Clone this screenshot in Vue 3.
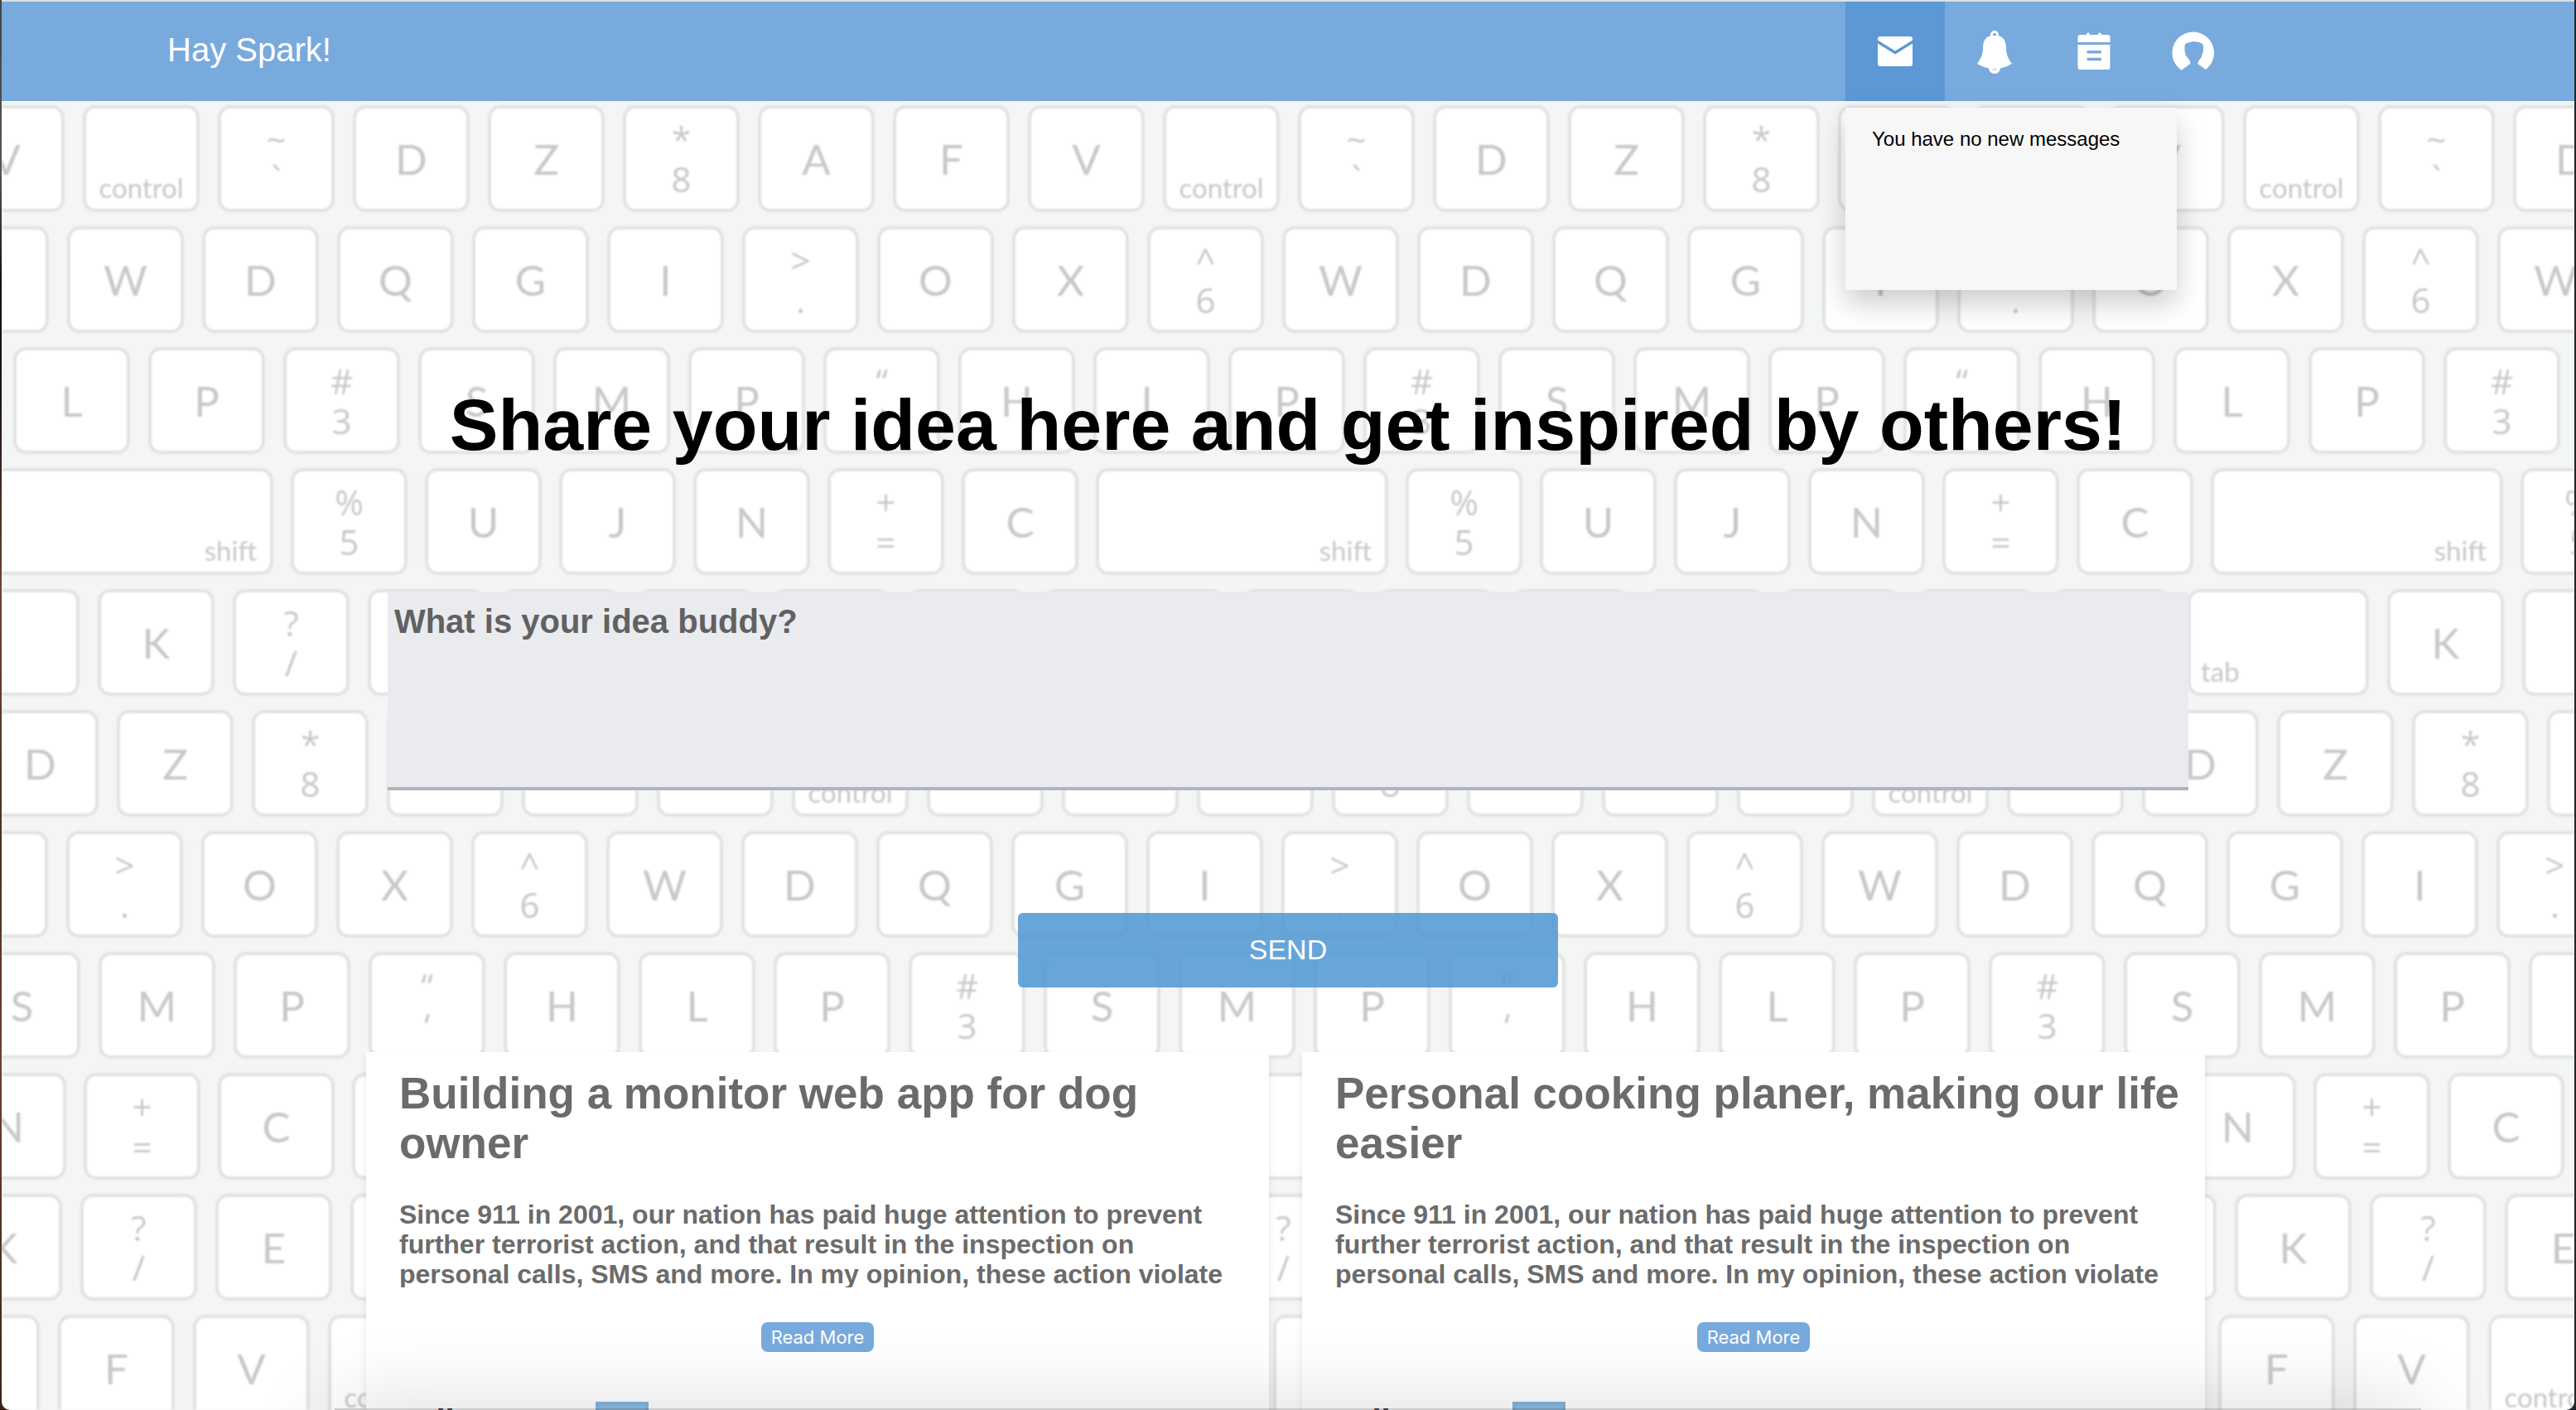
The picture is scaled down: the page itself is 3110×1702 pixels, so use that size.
<script setup>
import { ref } from 'vue'

const idea = ref('')

// Keyboard backdrop: each row repeats its own run of keys.
const row = (offset, start, run, count) => ({
  offset,
  tight: run.includes('shift'),
  keys: Array.from({ length: count }, (_, i) => run[(start + i) % run.length]),
})

const bottomRun = ['V', 'control', '~ `', 'D', 'Z', '* 8', 'A', 'F']
const topRun = ['W', 'D', 'Q', 'G', 'I', '> .', 'O', 'X', '^ 6']
const homeRun = ['L', 'P', '# 3', 'S', 'M', 'P', '“ ‘', 'H']
const shiftRun = ['shift', '% 5', 'U', 'J', 'N', '+ =', 'C']
const tabRun = ['tab', 'K', '? /', 'E', 'R', 'T', 'Y', 'B']

const keyboard = [
  row(-65, 0, bottomRun, 20),
  row(-84, 8, topRun, 20),
  row(14, 0, homeRun, 19),
  row(-25, 0, shiftRun, 17),
  row(-125, 0, tabRun, 19),
  row(-24, 3, bottomRun, 20),
  row(-85, 4, topRun, 20),
  row(-46, 3, homeRun, 20),
  row(-63, 4, shiftRun, 17),
  row(-68, 1, tabRun, 19),
  row(-95, 6, bottomRun, 20),
].map((r) => ({
  ...r,
  keys: r.keys.map((k) => ({
    glyphs: k.split(' '),
    kind: ['shift', 'tab', 'control'].includes(k) ? k : k.includes(' ') ? 'dual' : 'letter',
  })),
}))

const excerpt =
  'Since 911 in 2001, our nation has paid huge attention to prevent further terrorist action, and that result in the inspection on personal calls, SMS and more. In my opinion, these action violate'

const ideas = ref([
  { title: 'Building a monitor web app for dog owner', body: excerpt, likes: 500 },
  { title: 'Personal cooking planer, making our life easier', body: excerpt, likes: 10 },
])
</script>

<template>
  <div class="window">
    <div class="page">
      <div class="keyboard" aria-hidden="true">
        <div
          v-for="(r, i) in keyboard"
          :key="i"
          class="key-row"
          :class="{ tight: r.tight }"
          :style="{ marginLeft: r.offset + 'px' }"
        >
          <div v-for="(k, j) in r.keys" :key="j" class="key" :class="k.kind">
            <span v-for="g in k.glyphs" :key="g">{{ g }}</span>
          </div>
        </div>
      </div>

      <header class="navbar">
        <a class="brand" href="#">Hay Spark!</a>
        <nav class="actions">
          <div class="action-item">
            <button class="action active" type="button" aria-label="Messages">
              <svg viewBox="0 0 120 120" fill="#fff">
                <path d="M42 42H78Q81 42 81 45V46.500L60 59.500L39 46.500V45Q39 42 42 42Z" />
                <path d="M39 50.500L60 63.500L81 50.500V75Q81 78 78 78H42Q39 78 39 75Z" />
              </svg>
            </button>
            <div class="dropdown">You have no new messages</div>
          </div>
          <button class="action" type="button" aria-label="Notifications">
            <svg viewBox="0 0 120 120" fill="#fff">
              <circle cx="60" cy="40" r="3.600" fill="none" stroke="#fff" stroke-width="3" />
              <path d="M39 75C44 68 46 63 46 56C46 47 50 42 56 41H64C70 42 74 47 74 56C74 63 76 68 81 75C76 78 68 81 60 81C52 81 44 78 39 75Z" />
              <path d="M53 79H67C67 84 64 87 60 87C56 87 53 84 53 79Z" />
              <path d="M57 81.500H63Q60 83.500 57 81.500Z" fill="#78aadd" />
            </svg>
          </button>
          <button class="action" type="button" aria-label="Calendar">
            <svg viewBox="0 0 120 120" fill="#fff">
              <path d="M44 40H51V39Q53 35.500 55 39V40H65V39Q67 35.500 69 39V40H76.500Q79.500 40 79.500 43V49H40.500V43Q40.500 40 44 40Z" />
              <path d="M40.500 52H79.500V79Q79.500 82 76.500 82H43.500Q40.500 82 40.500 79Z" />
              <path d="M53 60.700H67.500M53 69.500H67.500" stroke="#78aadd" stroke-width="3.400" stroke-linecap="round" />
            </svg>
          </button>
          <button class="action" type="button" aria-label="Profile">
            <svg viewBox="0 0 120 120" fill="#fff">
              <path d="M45.500 82.700A25.300 25.300 0 1 1 75 82L65.300 75L66 72Q70 68 71 63L72 59V53Q71 50 67 49L60 48L52 50Q49.500 51 49.500 54V60L51 65L56.300 72V75Z" />
            </svg>
          </button>
        </nav>
      </header>

      <main>
        <form class="composer" @submit.prevent>
          <h1>Share your idea here and get inspired by others!</h1>
          <textarea v-model="idea" aria-label="Your idea" placeholder="What is your idea buddy?"></textarea>
          <button class="send" type="submit">SEND</button>
        </form>

        <section class="ideas">
          <article v-for="item in ideas" :key="item.title" class="card">
            <h2>{{ item.title }}</h2>
            <p class="excerpt">{{ item.body }}</p>
            <button class="more" type="button">Read More</button>
            <div class="likes">
              <span>Likes : {{ item.likes }}</span>
              <button class="like" type="button" aria-label="Like" @click="item.likes++"></button>
            </div>
          </article>
        </section>
      </main>
    </div>
    <div class="dock-shadow"></div>
  </div>
</template>

<style>
body {
  margin: 0;
}
</style>

<style scoped>
* {
  box-sizing: border-box;
}

.window {
  position: relative;
  height: 100vh;
  padding: 0 2px;
  overflow: hidden;
  background: linear-gradient(90deg, transparent 50%, #22262a 50%),
    linear-gradient(#444 0%, #555 12%, #111 20%, #1a1412 28%, #6b4334 42%, #4a2e24 60%, #6b4030 75%, #3a221a 100%);
  font-family: "Liberation Sans", Arial, sans-serif;
}

.page {
  position: relative;
  height: 100%;
  overflow: auto;
  scrollbar-width: none;
  border-top: 2px solid #dfe0e0;
  border-radius: 0 0 10px 10px;
  background: #f4f6f6;
}

.keyboard {
  position: absolute;
  inset: 125px 0 0;
  display: flex;
  flex-direction: column;
  gap: 17px;
  overflow: hidden;
  filter: blur(1px);
  font-family: Lato, sans-serif;
  color: #c8c8c8;
  user-select: none;
}

.key-row {
  display: flex;
  flex: none;
  gap: 22px;
}

.key-row.tight {
  gap: 21px;
}

.key {
  display: flex;
  flex: none;
  flex-direction: column;
  align-items: center;
  justify-content: center;
  width: 141px;
  height: 129px;
  border: 4px solid #e3e2e2;
  border-radius: 15px;
  background: #fff;
  font-size: 51px;
  line-height: 60px;
}

.key.dual {
  font-family: "Open Sans", sans-serif;
  font-size: 42px;
  line-height: 48px;
}

.key.shift,
.key.tab,
.key.control {
  justify-content: flex-end;
  padding: 0 12px 6px;
  font-size: 33px;
  line-height: 40px;
}

.key.shift {
  align-items: flex-end;
  width: 353px;
  padding-right: 16px;
}

.key.tab {
  align-items: flex-start;
  width: 219px;
}

.navbar {
  position: relative;
  z-index: 2;
  display: flex;
  align-items: center;
  justify-content: space-between;
  height: 120px;
  padding: 0 400px 0 200px;
  background: #78aadd;
}

.brand {
  padding-bottom: 4px;
  color: #fff;
  font-size: 40px;
  text-decoration: none;
}

.actions {
  display: flex;
}

.action-item {
  position: relative;
}

.action {
  display: block;
  width: 120px;
  height: 120px;
  padding: 0;
  border: 0;
  background: none;
}

.action.active {
  background: #5b98d5;
}

.action svg {
  display: block;
}

.dropdown {
  position: absolute;
  top: 128px;
  left: 0;
  width: 400px;
  height: 220px;
  padding: 24px 32px;
  background: #f7f7f7;
  box-shadow: 0 16px 32px rgba(0, 0, 0, 0.2);
  font-size: 24px;
  line-height: 28px;
}

main {
  position: relative;
}

.composer {
  display: flex;
  flex-direction: column;
  align-items: center;
  padding-top: 341px;
}

h1 {
  margin: 0;
  font-size: 88px;
  line-height: 100px;
}

textarea {
  width: 70%;
  height: 240px;
  margin-top: 151px;
  padding: 12px 8px;
  border: 0;
  border-bottom: 4px solid #b0b5bd;
  outline: 0;
  resize: none;
  background: #e9ebee;
  color: #444;
  font: bold 40px/48px "Liberation Sans", Arial, sans-serif;
}

textarea::placeholder {
  color: #616161;
}

.send {
  width: 21%;
  height: 90px;
  margin-top: 148px;
  padding: 0 0 2px;
  border: 0;
  border-radius: 6px;
  background: rgba(77, 150, 211, 0.85);
  color: #fff;
  font: 34px "Liberation Sans", Arial, sans-serif;
}

.ideas {
  display: grid;
  grid-template-columns: 1fr 1fr;
  gap: 40px;
  padding: 78px 446px 0 440px;
}

.card {
  padding: 20px 0 40px;
  background: #fff;
  box-shadow: 0 4px 8px rgba(0, 0, 0, 0.1);
  color: #6b6b6b;
}

h2 {
  margin: 0;
  padding: 0 10px 0 40px;
  font-size: 53px;
  line-height: 60px;
}

.excerpt {
  height: 106px;
  margin: 38px 0 0;
  padding: 0 30px 0 40px;
  overflow: hidden;
  font-size: 32px;
  font-weight: bold;
  line-height: 36px;
}

.more {
  display: block;
  width: 136px;
  height: 36px;
  margin: 42px auto 0;
  padding: 0;
  border: 0;
  border-radius: 8px;
  background: #78aadd;
  color: #fff;
  font: 22px Inter, sans-serif;
}

.likes {
  display: flex;
  gap: 12px;
  margin-top: 60px;
  padding-left: 60px;
  color: #444;
  font-size: 40px;
  font-weight: bold;
  line-height: 48px;
}

.like {
  width: 64px;
  border: 4px solid #81b4de;
  background: #8fbce4;
}

.dock-shadow {
  position: absolute;
  right: 6%;
  bottom: -98px;
  left: 13%;
  height: 100px;
  background: rgba(0, 0, 0, 0.2);
  box-shadow: 0 0 100px rgba(0, 0, 0, 0.15);
  pointer-events: none;
}
</style>
